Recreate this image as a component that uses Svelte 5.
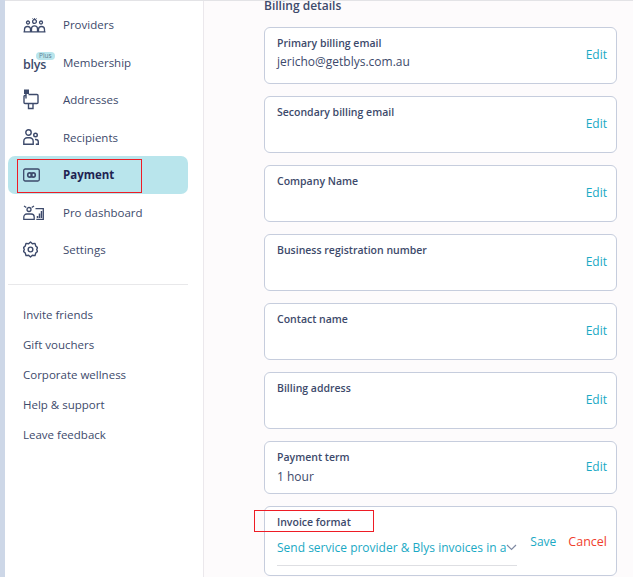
<script>
  const navItems = [
    { label: 'Providers', icon: 'providers' },
    { label: 'Membership', icon: 'blys' },
    { label: 'Addresses', icon: 'mailbox' },
    { label: 'Recipients', icon: 'recipients' },
    { label: 'Payment', icon: 'payment', active: true },
    { label: 'Pro dashboard', icon: 'dashboard' },
    { label: 'Settings', icon: 'settings' }
  ];

  const links = ['Invite friends', 'Gift vouchers', 'Corporate wellness', 'Help & support', 'Leave feedback'];

  const fields = [
    { label: 'Primary billing email', value: 'jericho@getblys.com.au' },
    { label: 'Secondary billing email', value: '' },
    { label: 'Company Name', value: '' },
    { label: 'Business registration number', value: '' },
    { label: 'Contact name', value: '' },
    { label: 'Billing address', value: '' },
    { label: 'Payment term', value: '1 hour', short: true }
  ];
</script>

<div class="page">
  <aside class="sidebar">
    <nav class="nav">
      {#each navItems as item}
        <div class="nav-item" class:active={item.active}>
          <span class="icon">
            {#if item.icon === 'providers'}
              <svg width="23" height="16" viewBox="0 0 23 16" fill="none" stroke="#3d4a6b" stroke-width="1.3">
                <path d="M9.500 1.500l1 1 1-1.200 1 1.200 1-1" stroke-width="1" />
                <circle cx="11.500" cy="4.500" r="1.900" />
                <circle cx="5" cy="5.500" r="1.500" />
                <circle cx="18" cy="5.500" r="1.500" />
                <path d="M.5 14.800h22M1.500 14.800v-2.300a3 3 0 0 1 6 0v2.300M8.500 14.800v-3a3 3 0 0 1 6 0v3M15.500 14.800v-2.300a3 3 0 0 1 6 0v2.300" />
              </svg>
            {:else if item.icon === 'blys'}
              <span class="blys">blys<span class="plus">Plus</span></span>
            {:else if item.icon === 'mailbox'}
              <svg width="16" height="21" viewBox="0 0 16 21" fill="none" stroke="#3d4a6b" stroke-width="1.4">
                <rect x="1.500" y="1" width="4" height="3.500" fill="#3d4a6b" stroke-width="1" />
                <path d="M3 4.500v5M1 7.500v6a1 1 0 0 0 1 1h12a1 1 0 0 0 1-1V6.500a1 1 0 0 0-1-1H5.500M1 7.500a1 1 0 0 1 1-1h1M5.500 14.500v5h4.500v-5" />
              </svg>
            {:else if item.icon === 'recipients'}
              <svg width="16" height="16" viewBox="0 0 16 16" fill="none" stroke="#3d4a6b" stroke-width="1.4">
                <circle cx="5.500" cy="3.500" r="2.700" />
                <circle cx="12.500" cy="6" r="1.800" />
                <path d="M.8 15.200v-3a3.500 3.500 0 0 1 3.500-3.500h2.400a3.500 3.500 0 0 1 3.500 3.500v3zM12 10.500h.8a2.500 2.500 0 0 1 2.500 2.500v2.200h-2.500" />
              </svg>
            {:else if item.icon === 'payment'}
              <svg width="17" height="14" viewBox="0 0 17 14" fill="none" stroke="#3d4a6b" stroke-width="1.300">
                <rect x=".7" y="1" width="15.600" height="12" rx="1.500" />
                <circle cx="6.800" cy="7" r="2.100" stroke-width="1.600" />
                <circle cx="10.200" cy="7" r="2.100" stroke-width="1.600" />
              </svg>
            {:else if item.icon === 'dashboard'}
              <svg width="21" height="15" viewBox="0 0 21 15" fill="none" stroke="#3d4a6b" stroke-width="1.300">
                <circle cx="6" cy="4.500" r="2" />
                <path d="M1 1l2.300 1.500M11 1L8.700 2.500M.8 14.300v-2.300a3 3 0 0 1 3-3h4.400a3 3 0 0 1 3 3v2.300zM12.500 3.700h7.800v10.600h-7" />
                <path d="M14.500 13v-2M16.500 13V8.500M18.500 13V6" stroke-width="1.500" />
              </svg>
            {:else}
              <svg width="15" height="17" viewBox="0 0 16 18" fill="none" stroke="#3d4a6b" stroke-width="1.500">
                <path d="M8 1l2 1.800 2.800-.3.800 2.700 1.900 1.800-.9 2 .9 2-1.900 1.800-.8 2.700-2.800-.3L8 17l-2-1.800-2.800.3-.8-2.700L.5 11l.9-2-.9-2 1.900-1.800.8-2.700 2.800.3z" stroke-linejoin="round" />
                <circle cx="8" cy="9" r="2.500" />
              </svg>
            {/if}
          </span>
          <span class="nav-label">{item.label}</span>
        </div>
      {/each}
    </nav>
    <hr class="divider" />
    <div class="links">
      {#each links as link}
        <div class="link">{link}</div>
      {/each}
    </div>
  </aside>

  <main class="main">
    <h2 class="title">Billing details</h2>
    <div class="cards">
      {#each fields as field}
        <div class="card" class:short={field.short}>
          <div class="card-body">
            <div class="label">{field.label}</div>
            <div class="value">{field.value}</div>
          </div>
          <span class="edit">Edit</span>
        </div>
      {/each}
      <div class="card editing">
        <div class="card-body">
          <div class="label">Invoice format</div>
          <div class="select">
            <span class="select-text">Send service provider &amp; Blys invoices in a single file</span>
            <svg width="11" height="7" viewBox="0 0 11 7" fill="none" stroke="#7f8aa3" stroke-width="1.2">
              <path d="M1 1l4.500 4.500L10 1" />
            </svg>
          </div>
        </div>
        <span class="save">Save</span>
        <span class="cancel">Cancel</span>
      </div>
    </div>
  </main>

  <div class="topline"></div>
  <div class="mark mark-payment"></div>
  <div class="mark mark-invoice"></div>
</div>

<style>
  :global(body) {
    margin: 0;
    font-family: "Open Sans", "Liberation Sans", sans-serif;
    color: #3d4a6b;
  }

  .page {
    position: relative;
    display: flex;
    height: 577px;
    overflow: hidden;
    background: #fdfbfc;
    border-left: 5px solid #cdd7e7;
    box-sizing: border-box;
  }

  .topline {
    position: absolute;
    left: 0;
    right: 0;
    top: 0;
    height: 1px;
    background: #e3e3e6;
  }

  .sidebar {
    width: 199px;
    flex: none;
    box-sizing: border-box;
    background: #fff;
    border-right: 1px solid #ebe8ec;
    padding: 6px 15px 0 3px;
  }

  .nav-item {
    display: flex;
    align-items: center;
    height: 37.5px;
    border-radius: 7px;
    font-size: 11.500px;
  }

  .nav-item.active {
    background: #b9e5ec;
    font-weight: 700;
    color: #1f2452;
  }

  .icon {
    width: 55px;
    flex: none;
    padding-left: 15px;
    box-sizing: border-box;
    display: flex;
    align-items: center;
  }

  .blys {
    position: relative;
    font-size: 12.500px;
    font-weight: 600;
    letter-spacing: -0.2px;
    line-height: 14px;
    padding-top: 5px;
  }

  .plus {
    position: absolute;
    left: 13px;
    top: -1px;
    font-size: 6.500px;
    font-weight: 400;
    line-height: 8px;
    padding: 0 3px;
    border-radius: 4px;
    background: #b9e5ec;
    letter-spacing: 0;
    color: #5f7f93;
  }

  .divider {
    border: 0;
    border-top: 1px solid #e8e8ea;
    margin: 15px 0 15px;
  }

  .links {
    padding-left: 15px;
  }

  .link {
    height: 30px;
    line-height: 30px;
    font-size: 11.500px;
  }

  .main {
    flex: 1;
    padding: 0 16px 0 60px;
    min-width: 0;
  }

  .title {
    margin: 0;
    height: 27px;
    font-size: 12px;
    font-weight: 600;
    line-height: 11px;
  }

  .cards {
    display: flex;
    flex-direction: column;
    gap: 12px;
  }

  .card {
    display: flex;
    align-items: center;
    box-sizing: border-box;
    height: 57px;
    padding: 0 9px 0 12px;
    background: #fff;
    border: 1px solid #c6cddd;
    border-radius: 6px;
  }

  .card.short {
    height: 53px;
  }

  .card.editing {
    height: 70px;
  }

  .card-body {
    flex: 1;
    min-width: 0;
    align-self: flex-start;
    padding-top: 8px;
  }

  .label {
    font-size: 10.500px;
    font-weight: 600;
    line-height: 14px;
  }

  .value {
    margin-top: 4px;
    font-size: 12px;
    line-height: 16px;
  }

  .short .value {
    margin-top: 5px;
  }

  .edit {
    margin-bottom: 2px;
    font-size: 12px;
    color: #1aa9c4;
  }

  .save {
    font-size: 12px;
    color: #1aa9c4;
  }

  .cancel {
    margin-left: 12px;
    font-size: 12.500px;
    color: #f0402e;
  }

  .editing .card-body {
    padding-right: 13px;
  }

  .select {
    display: flex;
    align-items: center;
    margin-top: 9px;
    padding-bottom: 8px;
    box-sizing: border-box;
    height: 28px;
    border-bottom: 1px solid #dedfe3;
  }

  .select-text {
    flex: 1;
    min-width: 0;
    white-space: nowrap;
    overflow: hidden;
    font-size: 12px;
    color: #1aa9c4;
  }

  .mark {
    position: absolute;
    border: 1px solid #ee1c25;
    box-sizing: border-box;
  }

  .mark-payment {
    left: 12px;
    top: 159px;
    width: 125px;
    height: 34px;
  }

  .mark-invoice {
    left: 249px;
    top: 510px;
    width: 120px;
    height: 22px;
  }
</style>
